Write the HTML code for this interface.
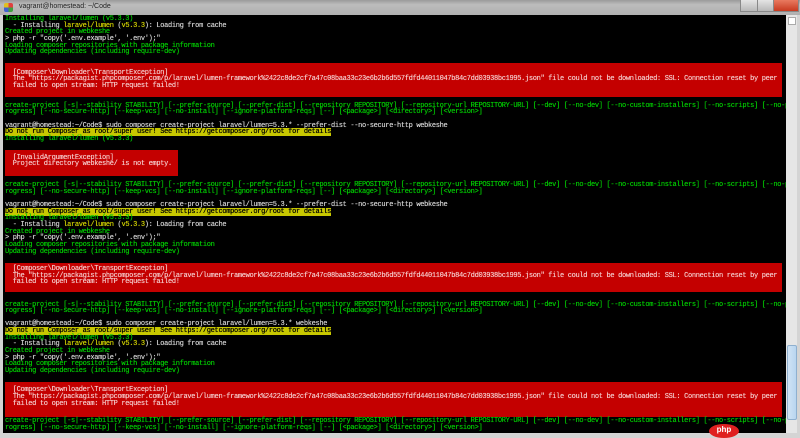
<!DOCTYPE html>
<html><head><meta charset="utf-8"><style>
*{margin:0;padding:0}
body{width:800px;height:433px;overflow:hidden;background:#d4d4d4;position:relative;font-family:"Liberation Mono",monospace}
#title{position:absolute;left:0;top:0;width:800px;height:15px;background:linear-gradient(#9a9a9a,#bcbcbc 30%,#b0b0b0);}
#title .t{position:absolute;left:19px;top:3px;font:7px "Liberation Sans",sans-serif;color:#222}
#icon{position:absolute;left:4px;top:3px;width:9px;height:9px;background:conic-gradient(#e04040 0 25%,#40a040 0 50%,#4060d0 0 75%,#e0c020 0);border-radius:2px}
.btn{position:absolute;top:0;height:11px;border:1px solid #888;border-top:none;background:linear-gradient(#e4e4e4,#b8b8b8)}
#term{position:absolute;left:3px;top:15px;width:783px;height:418px;background:#000;overflow:hidden}
#sb{position:absolute;left:786px;top:15px;width:11px;height:418px;background:#e6e6e6}
#thumb{position:absolute;left:1px;top:330px;width:8px;height:73px;background:linear-gradient(90deg,#cfe3f5,#b9d5ef);border:1px solid #8fb0cf;border-radius:2px}
.l{position:absolute;left:2px;height:6.67px;line-height:6.67px;font-size:7px;letter-spacing:-0.32px;white-space:pre;color:#00c800;text-shadow:0 0 0.4px currentColor}
.w{color:#d0d0d0}.y{color:#d0d000}
.hl{background:#c8c800;color:#000}
.red{position:absolute;left:2px;background:#c40000}
.r{color:#f4c8c8}
</style></head><body>
<div id="title"><div id="icon"></div><div class="t">vagrant@homestead: ~/Code</div>
<div class="btn" style="left:740px;width:16px"></div>
<div class="btn" style="left:757px;width:15px"></div>
<div class="btn" style="left:773px;width:24px;background:linear-gradient(#e87a60,#c83a20)"></div>
</div>
<div id="term">
<div class="l" style="top:1px">Installing laravel/lumen (v5.3.3)</div>
<div class="l w" style="top:7.67px">  - Installing <span class="y">laravel/lumen</span> (<span class="y">v5.3.3</span>): Loading from cache</div>
<div class="l" style="top:14.33px">Created project in webkeshe</div>
<div class="l w" style="top:21px">&gt; php -r "copy('.env.example', '.env');"</div>
<div class="l" style="top:27.67px">Loading composer repositories with package information</div>
<div class="l" style="top:34.33px">Updating dependencies (including require-dev)</div>
<div class="red" style="top:48px;width:777px;height:34px"></div>
<div class="l r" style="top:54.5px">  [Composer\Downloader\TransportException]</div>
<div class="l r" style="top:61px">  The "https://packagist.phpcomposer.com/p/laravel/lumen-framework%2422c8de2cf7a47c08baa33c23e6b2b6d557fdfd44011047b84c7dd03938bc1995.json" file could not be downloaded: SSL: Connection reset by peer</div>
<div class="l r" style="top:67.67px">  failed to open stream: HTTP request failed!</div>
<div class="l" style="top:87.67px">create-project [-s|--stability STABILITY] [--prefer-source] [--prefer-dist] [--repository REPOSITORY] [--repository-url REPOSITORY-URL] [--dev] [--no-dev] [--no-custom-installers] [--no-scripts] [--no-p</div>
<div class="l" style="top:94.33px">rogress] [--no-secure-http] [--keep-vcs] [--no-install] [--ignore-platform-reqs] [--] [&lt;package&gt;] [&lt;directory&gt;] [&lt;version&gt;]</div>
<div class="l w" style="top:107.67px">vagrant@homestead:~/Code$ sudo composer create-project laravel/lumen=5.3.* --prefer-dist --no-secure-http webkeshe</div>
<div class="l" style="top:114.33px"><span class="hl">Do not run Composer as root/super user! See https://getcomposer.org/root for details</span></div>
<div class="l" style="top:121px">Installing laravel/lumen (v5.3.3)</div>
<div class="red" style="top:135px;width:173px;height:26px"></div>
<div class="l r" style="top:139.5px">  [InvalidArgumentException]</div>
<div class="l r" style="top:146px">  Project directory webkeshe/ is not empty.</div>
<div class="l" style="top:167px">create-project [-s|--stability STABILITY] [--prefer-source] [--prefer-dist] [--repository REPOSITORY] [--repository-url REPOSITORY-URL] [--dev] [--no-dev] [--no-custom-installers] [--no-scripts] [--no-p</div>
<div class="l" style="top:173.67px">rogress] [--no-secure-http] [--keep-vcs] [--no-install] [--ignore-platform-reqs] [--] [&lt;package&gt;] [&lt;directory&gt;] [&lt;version&gt;]</div>
<div class="l w" style="top:187px">vagrant@homestead:~/Code$ sudo composer create-project laravel/lumen=5.3.* --prefer-dist --no-secure-http webkeshe</div>
<div class="l" style="top:193.67px"><span class="hl">Do not run Composer as root/super user! See https://getcomposer.org/root for details</span></div>
<div class="l" style="top:200.33px">Installing laravel/lumen (v5.3.3)</div>
<div class="l w" style="top:207px">  - Installing <span class="y">laravel/lumen</span> (<span class="y">v5.3.3</span>): Loading from cache</div>
<div class="l" style="top:213.67px">Created project in webkeshe</div>
<div class="l w" style="top:220.33px">&gt; php -r "copy('.env.example', '.env');"</div>
<div class="l" style="top:227px">Loading composer repositories with package information</div>
<div class="l" style="top:233.67px">Updating dependencies (including require-dev)</div>
<div class="red" style="top:247.5px;width:777px;height:29px"></div>
<div class="l r" style="top:251px">  [Composer\Downloader\TransportException]</div>
<div class="l r" style="top:257.67px">  The "https://packagist.phpcomposer.com/p/laravel/lumen-framework%2422c8de2cf7a47c08baa33c23e6b2b6d557fdfd44011047b84c7dd03938bc1995.json" file could not be downloaded: SSL: Connection reset by peer</div>
<div class="l r" style="top:264.33px">  failed to open stream: HTTP request failed!</div>
<div class="l" style="top:286.67px">create-project [-s|--stability STABILITY] [--prefer-source] [--prefer-dist] [--repository REPOSITORY] [--repository-url REPOSITORY-URL] [--dev] [--no-dev] [--no-custom-installers] [--no-scripts] [--no-p</div>
<div class="l" style="top:293.33px">rogress] [--no-secure-http] [--keep-vcs] [--no-install] [--ignore-platform-reqs] [--] [&lt;package&gt;] [&lt;directory&gt;] [&lt;version&gt;]</div>
<div class="l w" style="top:306.33px">vagrant@homestead:~/Code$ sudo composer create-project laravel/lumen=5.3.* webkeshe</div>
<div class="l" style="top:313px"><span class="hl">Do not run Composer as root/super user! See https://getcomposer.org/root for details</span></div>
<div class="l" style="top:319.67px">Installing laravel/lumen (v5.3.3)</div>
<div class="l w" style="top:326.33px">  - Installing <span class="y">laravel/lumen</span> (<span class="y">v5.3.3</span>): Loading from cache</div>
<div class="l" style="top:333px">Created project in webkeshe</div>
<div class="l w" style="top:339.67px">&gt; php -r "copy('.env.example', '.env');"</div>
<div class="l" style="top:346.33px">Loading composer repositories with package information</div>
<div class="l" style="top:353px">Updating dependencies (including require-dev)</div>
<div class="red" style="top:366.5px;width:777px;height:35px"></div>
<div class="l r" style="top:372px">  [Composer\Downloader\TransportException]</div>
<div class="l r" style="top:379px">  The "https://packagist.phpcomposer.com/p/laravel/lumen-framework%2422c8de2cf7a47c08baa33c23e6b2b6d557fdfd44011047b84c7dd03938bc1995.json" file could not be downloaded: SSL: Connection reset by peer</div>
<div class="l r" style="top:385.67px">  failed to open stream: HTTP request failed!</div>
<div class="l" style="top:402.67px">create-project [-s|--stability STABILITY] [--prefer-source] [--prefer-dist] [--repository REPOSITORY] [--repository-url REPOSITORY-URL] [--dev] [--no-dev] [--no-custom-installers] [--no-scripts] [--no-p</div>
<div class="l" style="top:409.5px">rogress] [--no-secure-http] [--keep-vcs] [--no-install] [--ignore-platform-reqs] [--] [&lt;package&gt;] [&lt;directory&gt;] [&lt;version&gt;]</div>
</div>
<div id="sb"><div style="position:absolute;left:2px;top:2px;width:6px;height:6px;background:#fff;border:1px solid #aaa"></div><div id="thumb"></div></div>
<div style="position:absolute;left:709px;top:424px;width:30px;height:14px;border-radius:50%;background:#e02020;color:#fff;font:bold 8px 'Liberation Sans',sans-serif;text-align:center;line-height:12px">php</div>
</body></html>
